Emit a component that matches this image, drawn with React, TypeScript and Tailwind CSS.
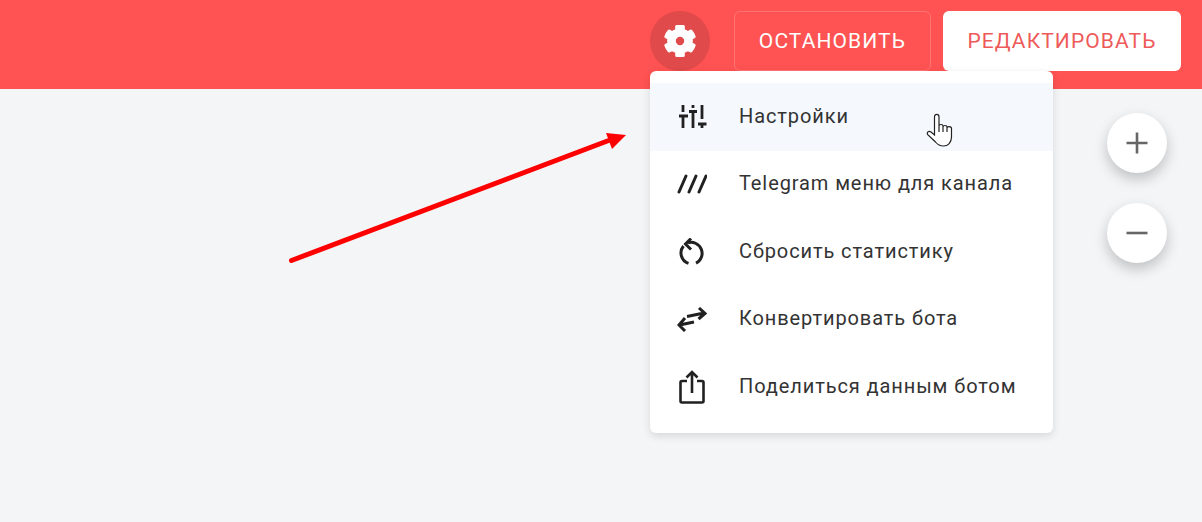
import { FaCog } from 'react-icons/fa';

const SlidersIcon = () => (
  <svg width="29" height="25" viewBox="0 0 29 25" fill="none" stroke="#212121" strokeWidth="2.8">
    <path d="M5 1v7M1 12h9M5 12v12M15 1v3M11 7.500h8M15 7.500V24M24 1v14M20 20h8.500M24 20v4" />
  </svg>
);

const SlashesIcon = () => (
  <svg width="30" height="20" viewBox="0 0 30 20" fill="none" stroke="#212121" strokeWidth="3" strokeLinecap="round">
    <path d="M2 18L9 2M12 18L19 2M22 18L29 2" />
  </svg>
);

const ResetIcon = () => (
  <svg width="28" height="28" viewBox="0 0 28 28" fill="none" stroke="#212121" strokeWidth="3">
    <path d="M10 4.800A11 11 0 0 1 18 25.200" />
    <path d="M10.500 25.400A11 11 0 0 1 5.500 8" />
    <path d="M13 0.500L7.500 6L13 11.500" />
  </svg>
);

const SwapIcon = () => (
  <svg width="30" height="25" viewBox="0 0 30 25" fill="none" stroke="#212121" strokeWidth="3">
    <path d="M10 9.500L27 6M22 1L28 6.500L21.500 12" />
    <path d="M2.500 18L17 15M8 11L2 18L8 24" />
  </svg>
);

const ShareIcon = () => (
  <svg width="26" height="34" viewBox="0 0 26 34" fill="none" stroke="#212121" strokeWidth="2.600">
    <path d="M8 11H3a1.500 1.500 0 0 0-1.500 1.500V31a1.500 1.500 0 0 0 1.500 1.500H23a1.500 1.500 0 0 0 1.500-1.500V12.500A1.500 1.500 0 0 0 23 11H18" />
    <path d="M13 23V2M7.500 7.500L13 2L18.500 7.500" />
  </svg>
);

const items = [
  { label: 'Настройки', icon: <SlidersIcon />, active: true },
  { label: 'Telegram меню для канала', icon: <SlashesIcon /> },
  { label: 'Сбросить статистику', icon: <ResetIcon /> },
  { label: 'Конвертировать бота', icon: <SwapIcon /> },
  { label: 'Поделиться данным ботом', icon: <ShareIcon /> },
];

export default function App() {
  return (
    <div className="relative h-[522px] w-[1202px] overflow-hidden bg-[#f4f5f7] font-['Roboto',sans-serif]">
      {/* Header */}
      <header className="flex h-[89px] items-start justify-end bg-[#ff5252] pt-[11px] pr-[21px]">
        <button className="mr-6 flex h-[60px] w-[60px] items-center justify-center rounded-full bg-[#e04a4a]">
          <FaCog className="text-[32px] text-white" stroke="#fff" strokeWidth={26} />
        </button>
        <button className="mr-3 h-[60px] w-[197px] rounded-md border border-[#ff7474] pt-[2px] text-[21px] font-[450] tracking-[1.1px] text-white">
          ОСТАНОВИТЬ
        </button>
        <button className="h-[60px] w-[238px] rounded-md bg-white pt-[2px] text-[21px] tracking-[1.1px] text-[#ee5a5a]">
          РЕДАКТИРОВАТЬ
        </button>
      </header>

      {/* Dropdown */}
      <div className="absolute top-[71px] left-[650px] w-[403px] rounded-md bg-white py-3 shadow-[0_3px_8px_rgba(0,0,0,0.12)]">
        {items.map(item => (
          <div
            key={item.label}
            className={`flex h-[67.500px] items-center ${item.active ? 'bg-[#f5f9fe]' : ''}`}
          >
            <div className="flex w-[89px] shrink-0 items-center pl-[27px]">
              <div className="flex w-[30px] justify-center">{item.icon}</div>
            </div>
            <span className="pb-[2px] text-[20px] tracking-[0.9px] text-[#333333]">{item.label}</span>
          </div>
        ))}
      </div>

      {/* Zoom buttons */}
      <div className="absolute top-[113px] left-[1107px] flex flex-col gap-[30px]">
        <button className="flex h-[60px] w-[60px] items-center justify-center rounded-full bg-white shadow-[0_6px_14px_rgba(0,0,0,0.22)]">
          <svg width="22" height="22" viewBox="0 0 22 22" fill="none" stroke="#666" strokeWidth="2.600">
            <path d="M11 0.500V21.500M0.500 11H21.500" />
          </svg>
        </button>
        <button className="flex h-[60px] w-[60px] items-center justify-center rounded-full bg-white shadow-[0_6px_14px_rgba(0,0,0,0.22)]">
          <svg width="22" height="22" viewBox="0 0 22 22" fill="none" stroke="#666" strokeWidth="2.600">
            <path d="M0.500 11H21.500" />
          </svg>
        </button>
      </div>

      {/* Red annotation arrow */}
      <svg className="absolute top-[125px] left-[280px]" width="360" height="145" viewBox="0 0 360 145" fill="none">
        <path d="M11.500 135.500L330 15" stroke="#ff0000" strokeWidth="5" strokeLinecap="round" />
        <path d="M346 10L326 8L332 24Z" fill="#ff0000" />
      </svg>

      {/* Hand cursor */}
      <svg className="absolute top-[113px] left-[926px]" width="28" height="34" viewBox="0 0 28 34" fill="#fff" stroke="#222" strokeWidth="1.200">
        <path d="M8.500 4c0-3.500 4.500-3.500 4.500 0V13c0-2 4-2 4 0v1c0-2 4-2 4 0v1c0-2 4.500-2 4.500 0.500V24c0 5.500-3.500 9-8 9c-4 0-6-1.500-8-4L1.500 21.500c-1-2.500 1.500-4 3.500-2.500l3.500 3Z" />
        <path d="M13 13v6M17 14v5M21 15v4" fill="none" />
      </svg>
    </div>
  );
}
